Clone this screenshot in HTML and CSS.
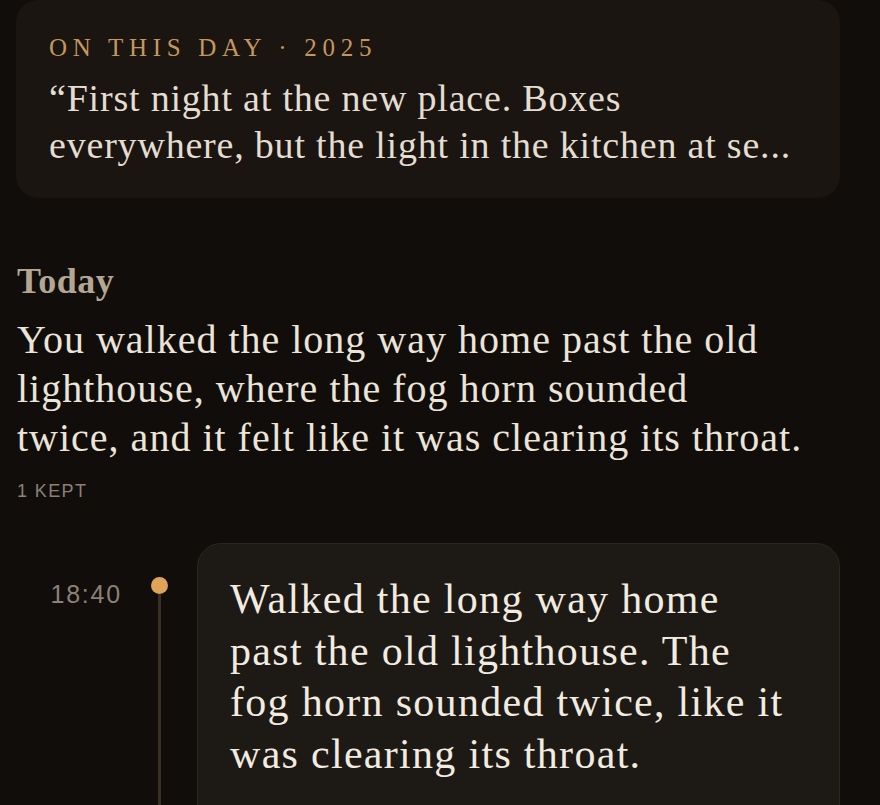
FILE: index.html
```html
<!DOCTYPE html>
<html lang="en">
<head>
<meta charset="utf-8">
<title>Journal</title>
<link rel="stylesheet" href="styles.css">
</head>
<body>
<main class="page">
  <section class="memory">
    <div class="memory-label">On this day · 2025</div>
    <p class="memory-quote">“First night at the new place. Boxes everywhere, but the light in the kitchen at se...</p>
  </section>

  <section class="day">
    <h2 class="day-title">Today</h2>
    <p class="day-summary">You walked the long way home past the old lighthouse, where the fog horn sounded<br>twice, and it felt like it was clearing its throat.</p>
    <div class="day-count">1 KEPT</div>
  </section>

  <section class="timeline">
    <div class="entry">
      <div class="entry-time">18:40</div>
      <div class="entry-rail"><span class="entry-dot"></span><span class="entry-line"></span></div>
      <div class="entry-card">
        <p class="entry-text">Walked the long way home<br>past the old lighthouse. The<br>fog horn sounded twice, like it<br>was clearing its throat.</p>
      </div>
    </div>
  </section>
</main>
</body>
</html>
```

FILE: styles.css
```css
html, body {
  margin: 0;
  padding: 0;
  background: #110d0a;
}
.page {
  width: 824px;
  height: 805px;
  overflow: hidden;
  margin-left: 16px;
  font-family: "Liberation Serif", "DejaVu Serif", serif;
}
.memory {
  background: #1a1511;
  border-radius: 22px;
  padding: 33px 33px 29px;
}
.memory-label {
  font-size: 25px;
  line-height: 30px;
  letter-spacing: 5.7px;
  text-transform: uppercase;
  color: #c4975e;
}
.memory-quote {
  margin: 12px 0 0;
  font-size: 38px;
  line-height: 47px;
  letter-spacing: 0.8px;
  color: #e4ddd1;
}
.day {
  margin-top: 62px;
  padding-left: 1px;
}
.day-title {
  margin: 0;
  font-size: 36px;
  line-height: 42px;
  letter-spacing: 0.5px;
  font-weight: bold;
  color: #b3a692;
}
.day-summary {
  margin: 13px 0 0;
  font-size: 40px;
  line-height: 49px;
  letter-spacing: 1px;
  color: #ebe4d8;
}
.day-count {
  margin-top: 18px;
  font-family: "Liberation Sans", Arial, sans-serif;
  font-size: 18px;
  line-height: 22px;
  letter-spacing: 1.4px;
  color: #8a8177;
}
.timeline {
  margin-top: 41px;
}
.entry {
  display: flex;
  align-items: stretch;
}
.entry-time {
  width: 106px;
  margin-top: 36px;
  text-align: right;
  font-family: "Liberation Sans", Arial, sans-serif;
  font-size: 25px;
  line-height: 30px;
  letter-spacing: 1.8px;
  color: #8a8177;
}
.entry-rail {
  width: 75px;
  display: flex;
  flex-direction: column;
  align-items: center;
  padding-top: 34px;
}
.entry-dot {
  width: 17px;
  height: 17px;
  border-radius: 50%;
  background: #e0a35a;
  flex: none;
}
.entry-line {
  width: 3px;
  flex: 1;
  background: #3b2e22;
}
.entry-card {
  flex: 1;
  background: #1d1915;
  border: 1px solid #2b2621;
  border-radius: 24px;
  padding: 30px 32px 30px;
  min-height: 300px;
}
.entry-text {
  margin: 0;
  font-size: 42px;
  line-height: 51.5px;
  letter-spacing: 1.3px;
  color: #f1ebe0;
}
```
